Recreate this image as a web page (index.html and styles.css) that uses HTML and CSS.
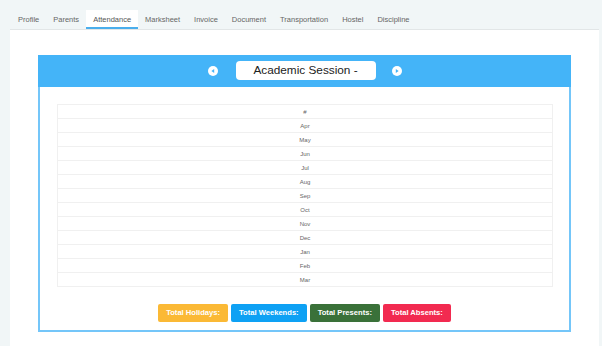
FILE: index.html
```html
<!DOCTYPE html>
<html lang="en">
<head>
    <meta charset="UTF-8">
    <meta name="viewport" content="width=device-width, initial-scale=1.0">
    <title>Student Attendance</title>
    <link rel="stylesheet" href="styles.css">
</head>
<body>

<div class="page">
    <ul class="tabs">
        <li>Profile</li>
        <li>Parents</li>
        <li class="active">Attendance</li>
        <li>Marksheet</li>
        <li>Invoice</li>
        <li>Document</li>
        <li>Transportation</li>
        <li>Hostel</li>
        <li>Discipline</li>
    </ul>

    <div class="panel">
        <div class="session">
            <div class="session-head">
                <span class="arrow">
                    <svg width="10" height="10" viewBox="0 0 10 10"><circle cx="5" cy="5" r="5" fill="#fff"/><path d="M6.2 2.9 L3.4 5 L6.2 7.1 Z" fill="#44b4f8"/></svg>
                </span>
                <div class="session-title">Academic Session -</div>
                <span class="arrow">
                    <svg width="10" height="10" viewBox="0 0 10 10"><circle cx="5" cy="5" r="5" fill="#fff"/><path d="M3.8 2.9 L6.6 5 L3.8 7.1 Z" fill="#44b4f8"/></svg>
                </span>
            </div>

            <table class="months">
                <tr><td>#</td></tr>
                <tr><td>Apr</td></tr>
                <tr><td>May</td></tr>
                <tr><td>Jun</td></tr>
                <tr><td>Jul</td></tr>
                <tr><td>Aug</td></tr>
                <tr><td>Sep</td></tr>
                <tr><td>Oct</td></tr>
                <tr><td>Nov</td></tr>
                <tr><td>Dec</td></tr>
                <tr><td>Jan</td></tr>
                <tr><td>Feb</td></tr>
                <tr><td>Mar</td></tr>
            </table>

            <div class="totals">
                <span class="badge holidays">Total Holidays:</span>
                <span class="badge weekends">Total Weekends:</span>
                <span class="badge presents">Total Presents:</span>
                <span class="badge absents">Total Absents:</span>
            </div>
        </div>
    </div>
</div>

</body>
</html>
```

FILE: styles.css
```css
body {
    margin: 0;
    background-color: #f1f6f7;
    font-family: "Liberation Sans", Arial, sans-serif;
}
.page {
    margin: 0 3px 0 10px;
}
.tabs {
    display: flex;
    list-style: none;
    margin: 10px 0 0 0;
    padding: 0 0 0 1px;
    border-bottom: 1px solid #e2e6e7;
}
.tabs li {
    padding: 0 7px;
    height: 19px;
    line-height: 19px;
    font-size: 7.5px;
    color: #666;
}
.tabs li.active {
    background-color: #fff;
    border-bottom: 2px solid #4aaeec;
    height: 17px;
    line-height: 19px;
    color: #555;
}
.panel {
    background-color: #fff;
    padding: 25px 28px 14px;
}
.session {
    border: 2px solid #74c6f9;
    border-top: none;
    padding-bottom: 8px;
}
.session-head {
    display: flex;
    justify-content: center;
    align-items: center;
    gap: 16px;
    height: 32px;
    margin: 0 -2px;
    background-color: #44b4f8;
}
.arrow {
    display: flex;
}
.session-title {
    width: 140px;
    height: 19px;
    line-height: 19px;
    margin: -1px 0 0 2px;
    background-color: #fff;
    border-radius: 4px;
    text-align: center;
    font-size: 11.8px;
    color: #222;
}
.months {
    width: calc(100% - 33px);
    margin: 17px 16px 0 17px;
    border-collapse: collapse;
}
.months td {
    height: 13px;
    padding: 0;
    border: 1px solid #f0f0f0;
    text-align: center;
    font-size: 6px;
    color: #666;
}
.totals {
    display: flex;
    justify-content: center;
    gap: 3px;
    margin-top: 17px;
}
.badge {
    padding: 0 8px;
    height: 18px;
    line-height: 18px;
    border-radius: 2px;
    font-size: 7.6px;
    font-weight: bold;
    color: #fff;
}
.holidays {
    background-color: #fbb935;
}
.weekends {
    background-color: #0ea1f4;
}
.presents {
    background-color: #3a7139;
}
.absents {
    background-color: #f22a50;
}
```
